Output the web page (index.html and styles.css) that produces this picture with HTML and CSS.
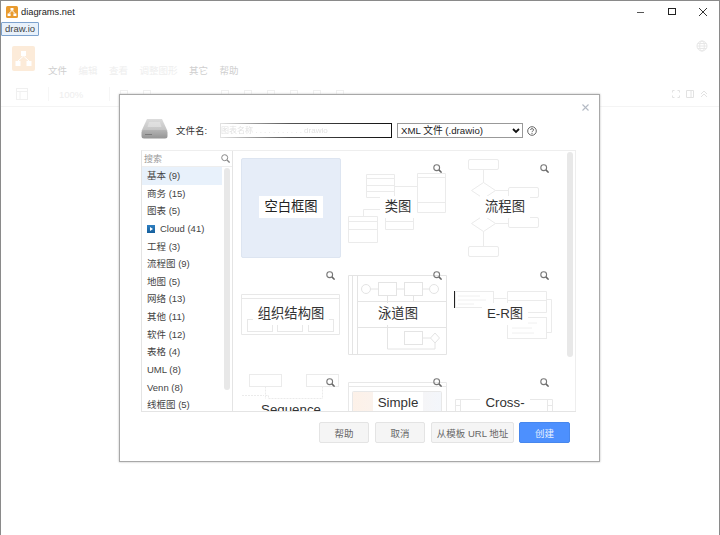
FILE: index.html
```html
<!DOCTYPE html>
<html lang="zh-CN">
	<head>
		<meta charset="UTF-8">
		<title>diagrams.net</title>
		<link rel="stylesheet" href="styles.css">
	</head>
	<body>
		<div class="window">
			<div class="titlebar">
				<svg class="app-icon" width="12" height="12" viewBox="0 0 12 12">
					<rect width="12" height="12" rx="1.5" fill="#e99b2f"/>
					<path d="M4.5 2h3v2.4h-3zM1.6 7.4h3v2.6h-3zM7.4 7.4h3v2.6h-3z" fill="#fff"/>
					<path d="M6 4.4 3.1 7.4M6 4.4l2.9 3" stroke="#fff" fill="none"/>
				</svg>
				<span class="app-name">diagrams.net</span>
				<div class="win-controls">
					<svg width="10" height="10" viewBox="0 0 10 10"><path d="M1 5.5h7" stroke="#555"/></svg>
					<svg width="10" height="10" viewBox="0 0 10 10"><rect x="1.500" y="1.500" width="7" height="6" fill="none" stroke="#222"/></svg>
					<svg width="10" height="10" viewBox="0 0 10 10"><path d="M1 1l8 8M9 1 1 9" stroke="#333" fill="none"/></svg>
				</div>
			</div>
			<div class="tabbar"><span class="tab">draw.io</span></div>
			<div class="app">
				<div class="app-head">
					<svg class="logo" width="23" height="25" viewBox="0 0 23 25">
						<rect width="23" height="25" rx="2" fill="#fcebd9"/>
						<path d="M9 5h5v5H9zM3.500 15h5v5h-5zM14.500 15h5v5h-5z" fill="#fff"/>
						<path d="M11.500 10 6 15M11.500 10l5.500 5" stroke="#fff" fill="none"/>
					</svg>
					<div class="menu">
						<span class="mid">文件</span><span>编辑</span><span>查看</span><span>调整图形</span><span class="mid">其它</span><span class="mid">帮助</span>
					</div>
					<svg class="globe" width="12" height="12" viewBox="0 0 12 12">
						<g fill="none" stroke="#e8e8e8"><circle cx="6" cy="6" r="5"/><ellipse cx="6" cy="6" rx="2.300" ry="5"/><path d="M1 6h10M1.700 3.500h8.600M1.700 8.500h8.600"/></g>
					</svg>
				</div>
				<div class="toolbar">
					<svg width="12" height="12" viewBox="0 0 12 12"><rect x=".5" y=".5" width="11" height="11" fill="none" stroke="#f0f0f0"/><path d="M.5 3.500h11M4 3.500v8" stroke="#f0f0f0"/></svg>
					<i class="tool-sep"></i>
					<span class="zoom-pct">100%</span>
					<i class="tool-sep"></i>
					<div class="tool-faint">
						<i></i><i></i><i class="gap"></i><i></i><i></i><i></i><i></i><i></i>
					</div>
					<div class="tool-right">
						<svg width="8" height="8" viewBox="0 0 8 8"><path d="M.5 2.500v-2h2M5.500.5h2v2M7.500 5.500v2h-2M2.500 7.500h-2v-2" fill="none" stroke="#e2e2e2"/></svg>
						<svg width="8" height="8" viewBox="0 0 8 8"><path d="M.5.5h7v7h-7zM5 .5v7" fill="none" stroke="#e2e2e2"/></svg>
						<svg width="8" height="8" viewBox="0 0 8 8"><path d="M1 4l3-3 3 3M1 7l3-3 3 3" fill="none" stroke="#e2e2e2"/></svg>
					</div>
				</div>
			</div>

			<div class="dialog">
				<svg class="dialog-close" width="7" height="7" viewBox="0 0 7 7"><path d="M.5.500l6 6M6.500.500l-6 6" stroke="#b4bac4" stroke-width="1.100"/></svg>
				<div class="file-row">
					<svg class="drive" width="27" height="20" viewBox="0 0 27 20">
						<defs>
							<linearGradient id="driveTop" x1="0" y1="0" x2="0" y2="1"><stop offset="0" stop-color="#dcdcdc"/><stop offset="1" stop-color="#c2c2c2"/></linearGradient>
							<linearGradient id="driveBody" x1="0" y1="0" x2="0" y2="1"><stop offset="0" stop-color="#b4b4b4"/><stop offset="1" stop-color="#949494"/></linearGradient>
						</defs>
						<path d="M6 0h15l5.500 12H.5z" fill="url(#driveTop)"/>
						<rect x=".5" y="11" width="26" height="8.500" rx="2.500" fill="url(#driveBody)"/>
						<path d="M4 15.500h7" stroke="#7c7c7c"/>
						<path d="M8 3h11l1.500 5H6.500z" fill="#e8e8e8" opacity=".6"/>
					</svg>
					<label class="file-label" for="filename">文件名:</label>
					<div class="filename-box">
						<span id="filename" class="filename-smudge">图表名称 . . . . . . . . . . . drawio</span>
					</div>
					<div class="fake-select">XML 文件 (.drawio)
						<svg width="8" height="6" viewBox="0 0 8 6"><path d="M1 1l3 3 3-3" fill="none" stroke="#111" stroke-width="1.800"/></svg>
					</div>
					<svg class="help" width="10" height="10" viewBox="0 0 10 10">
						<circle cx="5" cy="5" r="4.300" fill="none" stroke="#555" stroke-width=".9"/>
						<path d="M3.500 3.900C3.500 2.200 6.600 2.200 6.600 3.900 6.600 5 5 4.900 5 6.200" fill="none" stroke="#555" stroke-width=".9"/>
						<circle cx="5" cy="7.500" r=".6" fill="#555"/>
					</svg>
				</div>

				<div class="picker">
					<div class="sidebar">
						<div class="search">
							<span>搜索</span>
							<svg width="9" height="9" viewBox="0 0 9 9"><circle cx="3.700" cy="3.700" r="3" fill="none" stroke="#888"/><path d="M6 6l2.600 2.600" stroke="#888" stroke-width="1.300"/></svg>
						</div>
						<div class="categories">
							<ul class="cat-list">
								<li class="active">基本 (9)</li>
								<li>商务 (15)</li>
								<li>图表 (5)</li>
								<li class="cloud"><i class="cloud-icon"></i>Cloud (41)</li>
								<li>工程 (3)</li>
								<li>流程图 (9)</li>
								<li>地图 (5)</li>
								<li>网络 (13)</li>
								<li>其他 (11)</li>
								<li>软件 (12)</li>
								<li>表格 (4)</li>
								<li>UML (8)</li>
								<li>Venn (8)</li>
								<li>线框图 (5)</li>
							</ul>
							<div class="scroll-thumb side"></div>
						</div>
					</div>
					<div class="templates">
						<div class="grid">
							<div class="card blank"><span class="card-label">空白框图</span></div>

							<div class="card">
								<svg class="thumb" viewBox="0 0 100 100">
									<g fill="#fff" stroke="#ebebeb">
										<path d="M18.500 16.500h28v23h-28zM18.500 20.500h28M18.500 27.500h28M18.500 33.500h28"/>
										<path d="M69.500 15.500h28v39h-28zM69.500 19.500h28M69.500 44.500h28"/>
										<path d="M.5 58.500h29v26H.5zM.5 63.500h29M.5 71.500h29"/>
										<path d="M37.500 59.500h28v12h-28zM37.500 63.500h28"/>
										<path d="M46.500 28.500h23M15.500 58.500v-7h20" fill="none"/>
									</g>
								</svg>
								<svg class="zoom-icon" width="9" height="9" viewBox="0 0 9 9"><circle cx="3.700" cy="3.700" r="2.900" fill="none" stroke="#777" stroke-width="1.100"/><path d="M5.900 5.900l2.700 2.700" stroke="#666" stroke-width="1.500"/></svg>
								<span class="card-label">类图</span>
							</div>

							<div class="card">
								<svg class="thumb" viewBox="0 0 100 100">
									<g fill="#fff" stroke="#ebebeb">
										<rect x="13.500" y="1.500" width="30" height="10" rx="1.500"/>
										<path d="M28.500 11.500v13M28.500 24.500l12 8-12 8-12-8zM40.500 32.500h13"/>
										<rect x="53.500" y="29.500" width="30" height="10" rx="1.500"/>
										<path d="M28.500 40.500v17M28.500 57.500l12 8-12 8-12-8zM40.500 65.500h13"/>
										<rect x="53.500" y="59.500" width="30" height="10" rx="1.500"/>
										<path d="M28.500 73.500v15"/>
										<rect x="13.500" y="88.500" width="30" height="10" rx="1.500"/>
									</g>
								</svg>
								<svg class="zoom-icon" width="9" height="9" viewBox="0 0 9 9"><circle cx="3.700" cy="3.700" r="2.900" fill="none" stroke="#777" stroke-width="1.100"/><path d="M5.900 5.900l2.700 2.700" stroke="#666" stroke-width="1.500"/></svg>
								<span class="card-label">流程图</span>
							</div>

							<div class="card">
								<svg class="thumb" viewBox="0 0 100 100">
									<g fill="#fff" stroke="#e8e8e8">
										<path d="M.5 29.500h98v40H.5zM.5 33.500h98"/>
										<rect x="6.500" y="54.500" width="25" height="12"/>
										<rect x="36.500" y="54.500" width="25" height="12"/>
										<rect x="67.500" y="54.500" width="25" height="12"/>
									</g>
								</svg>
								<svg class="zoom-icon" width="9" height="9" viewBox="0 0 9 9"><circle cx="3.700" cy="3.700" r="2.900" fill="none" stroke="#777" stroke-width="1.100"/><path d="M5.900 5.900l2.700 2.700" stroke="#666" stroke-width="1.500"/></svg>
								<span class="card-label">组织结构图</span>
							</div>

							<div class="card">
								<svg class="thumb" viewBox="0 0 100 100">
									<g fill="#fff" stroke="#e4e4e4">
										<path d="M.5 10.500h98v79H.5zM4.500 10.500v79M9.500 10.500v79M9.500 36.500h89M9.500 62.500h89"/>
										<circle cx="18" cy="24" r="4.500"/>
										<path d="M22.500 24h7.500M48 24h8M74 24h7.500"/>
										<rect x="30.500" y="17.500" width="18" height="13"/>
										<rect x="56.500" y="17.500" width="18" height="13"/>
										<circle cx="86" cy="24" r="4.500"/>
										<path d="M39.500 30.500v6M65.500 30.500v6M39.500 36.500v47.500h47.500v-6" fill="none"/>
										<rect x="56.500" y="66.500" width="18" height="13"/>
										<path d="M74.500 73h8M87 68l4.500 5-4.500 5-4.500-5z"/>
									</g>
								</svg>
								<svg class="zoom-icon" width="9" height="9" viewBox="0 0 9 9"><circle cx="3.700" cy="3.700" r="2.900" fill="none" stroke="#777" stroke-width="1.100"/><path d="M5.900 5.900l2.700 2.700" stroke="#666" stroke-width="1.500"/></svg>
								<span class="card-label">泳道图</span>
							</div>

							<div class="card">
								<svg class="thumb" viewBox="0 0 100 100">
									<g fill="#fff" stroke="#ebebeb">
										<rect x=".5" y="26.500" width="38" height="16"/>
										<path d="M3 31h22M3 35h28M3 39h16" stroke="#f0f0f0"/>
										<path d="M38.500 33.500h13M91.500 34.500h5v33h-5" fill="none"/>
										<path d="M52.500 26.500h39v21h-39zM52.500 35.500h39"/>
										<rect x="52.500" y="52.500" width="39" height="21"/>
										<path d="M57 58h25M57 63h20M57 68h22" stroke="#f0f0f0"/>
									</g>
								</svg>
								<svg class="zoom-icon" width="9" height="9" viewBox="0 0 9 9"><circle cx="3.700" cy="3.700" r="2.900" fill="none" stroke="#777" stroke-width="1.100"/><path d="M5.900 5.900l2.700 2.700" stroke="#666" stroke-width="1.500"/></svg>
								<i class="caret"></i>
								<span class="card-label">E-R图</span>
							</div>

							<div class="card">
								<svg class="thumb" viewBox="0 0 100 100">
									<g fill="#fff" stroke="#ebebeb">
										<rect x="8.500" y="2.500" width="32" height="12"/>
										<rect x="65.500" y="2.500" width="32" height="12"/>
										<path d="M24.500 14.500v25M81.500 14.500v25M1 23.500h22M24.500 23.500h3v3h54" fill="none" stroke-dasharray="2 1"/>
									</g>
								</svg>
								<svg class="zoom-icon" width="9" height="9" viewBox="0 0 9 9"><circle cx="3.700" cy="3.700" r="2.900" fill="none" stroke="#777" stroke-width="1.100"/><path d="M5.900 5.900l2.700 2.700" stroke="#666" stroke-width="1.500"/></svg>
								<span class="card-label low lower">Sequence</span>
							</div>

							<div class="card">
								<svg class="thumb" viewBox="0 0 100 100">
									<defs>
										<linearGradient id="simpleFill" x1="0" y1="0" x2="1" y2="0"><stop offset="0" stop-color="#fdf1e8"/><stop offset="1" stop-color="#f3f6fb"/></linearGradient>
									</defs>
									<g fill="#fff" stroke="#e8e8e8">
										<path d="M.5 10.500h98v90H.5zM.5 14.500h98"/>
										<rect x="4.500" y="19.500" width="89" height="30" rx="1" fill="url(#simpleFill)"/>
									</g>
								</svg>
								<svg class="zoom-icon" width="9" height="9" viewBox="0 0 9 9"><circle cx="3.700" cy="3.700" r="2.900" fill="none" stroke="#777" stroke-width="1.100"/><path d="M5.900 5.900l2.700 2.700" stroke="#666" stroke-width="1.500"/></svg>
								<span class="card-label low">Simple</span>
							</div>

							<div class="card">
								<svg class="thumb" viewBox="0 0 100 100">
									<g fill="#fff" stroke="#e8e8e8">
										<path d="M.5 27.500h97v73H.5zM5.500 27.500v73M92.500 27.500v73M.5 33.500h5M92.500 33.500h5"/>
									</g>
								</svg>
								<svg class="zoom-icon" width="9" height="9" viewBox="0 0 9 9"><circle cx="3.700" cy="3.700" r="2.900" fill="none" stroke="#777" stroke-width="1.100"/><path d="M5.900 5.900l2.700 2.700" stroke="#666" stroke-width="1.500"/></svg>
								<span class="card-label low">Cross-</span>
							</div>
						</div>
						<div class="scroll-thumb main"></div>
					</div>
				</div>

				<div class="actions">
					<button class="btn help-btn">帮助</button>
					<button class="btn cancel-btn">取消</button>
					<button class="btn url-btn">从模板 URL 地址</button>
					<button class="btn primary">创建</button>
				</div>
			</div>
		</div>
	</body>
</html>
```

FILE: styles.css
```css
* {
	box-sizing: border-box;
}

html, body {
	margin:   0;
	height:   100%;
	overflow: hidden;
}

body {
	font-family: "Liberation Sans", "Noto Sans CJK SC", sans-serif;
	font-size:   9.5px;
	color:       #333;
	background:  #fff;
}

.window {
	position:       relative;
	width:          720px;
	height:         535px;
	display:        flex;
	flex-direction: column;
	border:         1px solid #8a8a8a;
	border-bottom:  0;
	background:     #fff;
}

.titlebar {
	height:      21px;
	display:     flex;
	align-items: center;
	padding:     0 0 0 5px;
	flex-shrink: 0;
}

.app-icon {
	margin-right: 3px;
}

.app-name {
	font-size: 9.3px;
	color:     #222;
}

.win-controls {
	margin-left:   auto;
	display:       flex;
	gap:           21px;
	padding-right: 11px;
}

.tabbar {
	height:      14px;
	flex-shrink: 0;
}

.tab {
	display:       inline-block;
	height:        14px;
	line-height:   12px;
	padding:       0 3px;
	border:        1px solid #7da2ce;
	border-radius: 1px;
	background:    #e8f1fb;
	font-size:     9.5px;
	color:         #444;
}

.app {
	flex: 1;
}

.app-head {
	height:      46px;
	display:     flex;
	align-items: flex-start;
	padding:     0 0 0 11px;
}

.logo {
	flex-shrink: 0;
	margin-top:  10px;
}

.menu {
	display:     flex;
	gap:         11.5px;
	margin:      28px 0 0 13px;
	font-size:   9.5px;
	color:       #eeeeee;
	line-height: 14px;
}

.menu .mid {
	color: #cfcfcf;
}

.globe {
	margin: 4px 11px 0 auto;
}

.toolbar {
	height:        25px;
	display:       flex;
	align-items:   center;
	padding:       0 11px 0 15px;
	border-bottom: 1px solid #f4f4f4;
}

.tool-sep {
	width:      1px;
	height:     14px;
	margin:     0 10px 0 20px;
	background: #f6f6f6;
}

.zoom-pct {
	width: 30px;
	color: #eeeeee;
}

.tool-faint {
	display: flex;
	gap:     15px;
}

.tool-faint i {
	width:  8px;
	height: 8px;
	border: 1px solid #f0f0f0;
}

.tool-faint .gap {
	margin-left: 55px;
}

.tool-right {
	margin-left: auto;
	display:     flex;
	gap:         6px;
}

/* the dialog lies over the dimmed app */
.dialog {
	position:       absolute;
	left:           118px;
	top:            93px;
	width:          481px;
	height:         368px;
	display:        flex;
	flex-direction: column;
	background:     #fff;
	border:         1px solid #a8a8a8;
	box-shadow:     0 0 2px #bbb;
	padding:        24px 23px 0 21px;
}

.dialog-close {
	position: absolute;
	top:      9px;
	right:    10px;
}

.file-row {
	height:      23px;
	display:     flex;
	align-items: center;
	flex-shrink: 0;
}

.drive {
	margin: -3px 8px 0 0;
}

.file-label {
	width:      44px;
	margin-top: -1px;
	color:      #333;
	font-size:  9.5px;
}

.filename-box {
	width:        172px;
	height:       15px;
	border-style: solid;
	border-width: 1px;
	border-image: linear-gradient(90deg, #e4e4e4, #555 40%, #111) 1;
	font-size:    8px;
	line-height:  13px;
	overflow:     hidden;
	white-space:  nowrap;
}

.filename-smudge {
	color:  #e2e2e2;
	filter: blur(.6px);
}

.fake-select {
	width:           126px;
	height:          15px;
	margin-left:     5px;
	padding:         0 2px 0 3px;
	line-height:     13px;
	border:          1px solid #999;
	font-size:       9.7px;
	color:           #222;
	display:         flex;
	align-items:     center;
	justify-content: space-between;
}

.help {
	margin-left: 4px;
}

.picker {
	margin-top:    8px;
	height:        262px;
	display:       flex;
	border-top:    1px solid #eeeeee;
	border-left:   1px solid #e4e4e4;
	border-bottom: 1px solid #e4e4e4;
	overflow:      hidden;
}

.sidebar {
	width:          91px;
	flex-shrink:    0;
	border-right:   1px solid #e4e4e4;
	display:        flex;
	flex-direction: column;
}

.search {
	height:          16px;
	display:         flex;
	align-items:     center;
	justify-content: space-between;
	padding:         0 2px;
	border-bottom:   1px solid #eee;
	color:           #999;
	font-size:       9px;
	flex-shrink:     0;
}

.categories {
	flex:     1;
	position: relative;
	overflow: hidden;
}

.cat-list {
	list-style: none;
	margin:     0;
	padding:    0;
	width:      80px;
}

.cat-list li {
	height:       17.65px;
	line-height:  17.65px;
	padding-left: 5px;
	font-size:    9.5px;
	color:        #444;
	white-space:  nowrap;
}

.cat-list li.active {
	background: #e8f1fb;
}

.cloud-icon {
	position:       relative;
	display:        inline-block;
	width:          8px;
	height:         8px;
	margin-right:   5px;
	vertical-align: -1px;
	background:     linear-gradient(#2f7fc1, #155f9c);
}

.cloud-icon::after {
	content:     "";
	position:    absolute;
	left:        3px;
	top:         2px;
	border-left: 3px solid #fff;
	border-top:  2px solid transparent;
	border-bottom: 2px solid transparent;
}

.scroll-thumb {
	position:      absolute;
	border-radius: 3px;
	background:    #e8e8e8;
}

.scroll-thumb.side {
	top:    1px;
	right:  2px;
	width:  6px;
	height: 222px;
}

.templates {
	flex:         1;
	position:     relative;
	overflow:     hidden;
	padding:      7px 0 0 8px;
	border-right: 1px solid #eee;
}

.grid {
	display:               grid;
	grid-template-columns: repeat(3, 100px);
	grid-auto-rows:        100px;
	gap:                   7px;
}

.card {
	position:        relative;
	display:         flex;
	align-items:     center;
	justify-content: center;
}

.card.blank {
	background:    #e6edf8;
	border:        1px solid #dde5f1;
	border-radius: 2px;
}

.thumb {
	position: absolute;
	inset:    0;
	width:    100%;
	height:   100%;
}

.zoom-icon {
	position: absolute;
	top:      6px;
	right:    6px;
}

.caret {
	position:   absolute;
	left:       -1px;
	top:        26px;
	width:      1px;
	height:     17px;
	background: #222;
}

.card-label {
	position:    relative;
	top:         -1px;
	padding:     1px 5px;
	font-size:   13.3px;
	line-height: 20px;
	background:  #fff;
	color:       #333;
	white-space: nowrap;
}

.card.blank .card-label {
	color: #222;
}

.card-label.low {
	align-self: flex-start;
	margin-top: 21px;
}

.card-label.lower {
	margin-top: 28px;
}

.scroll-thumb.main {
	top:    1px;
	right:  2px;
	width:  6px;
	height: 205px;
}

.actions {
	display:         flex;
	justify-content: flex-end;
	gap:             6px;
	margin-top:      10px;
	padding-right:   6px;
}

.btn {
	height:        21px;
	border:        1px solid #e4e4e4;
	border-radius: 2px;
	background:    #f5f5f5;
	font-family:   inherit;
	font-size:     9.5px;
	color:         #666;
	padding:       0;
}

.help-btn, .cancel-btn {
	width: 50px;
}

.url-btn {
	width: 83px;
}

.btn.primary {
	width:        51px;
	margin-left:  -1px;
	background:   #4d90fe;
	border-color: #4787ed;
	color:        #e8f0ff;
}
```
